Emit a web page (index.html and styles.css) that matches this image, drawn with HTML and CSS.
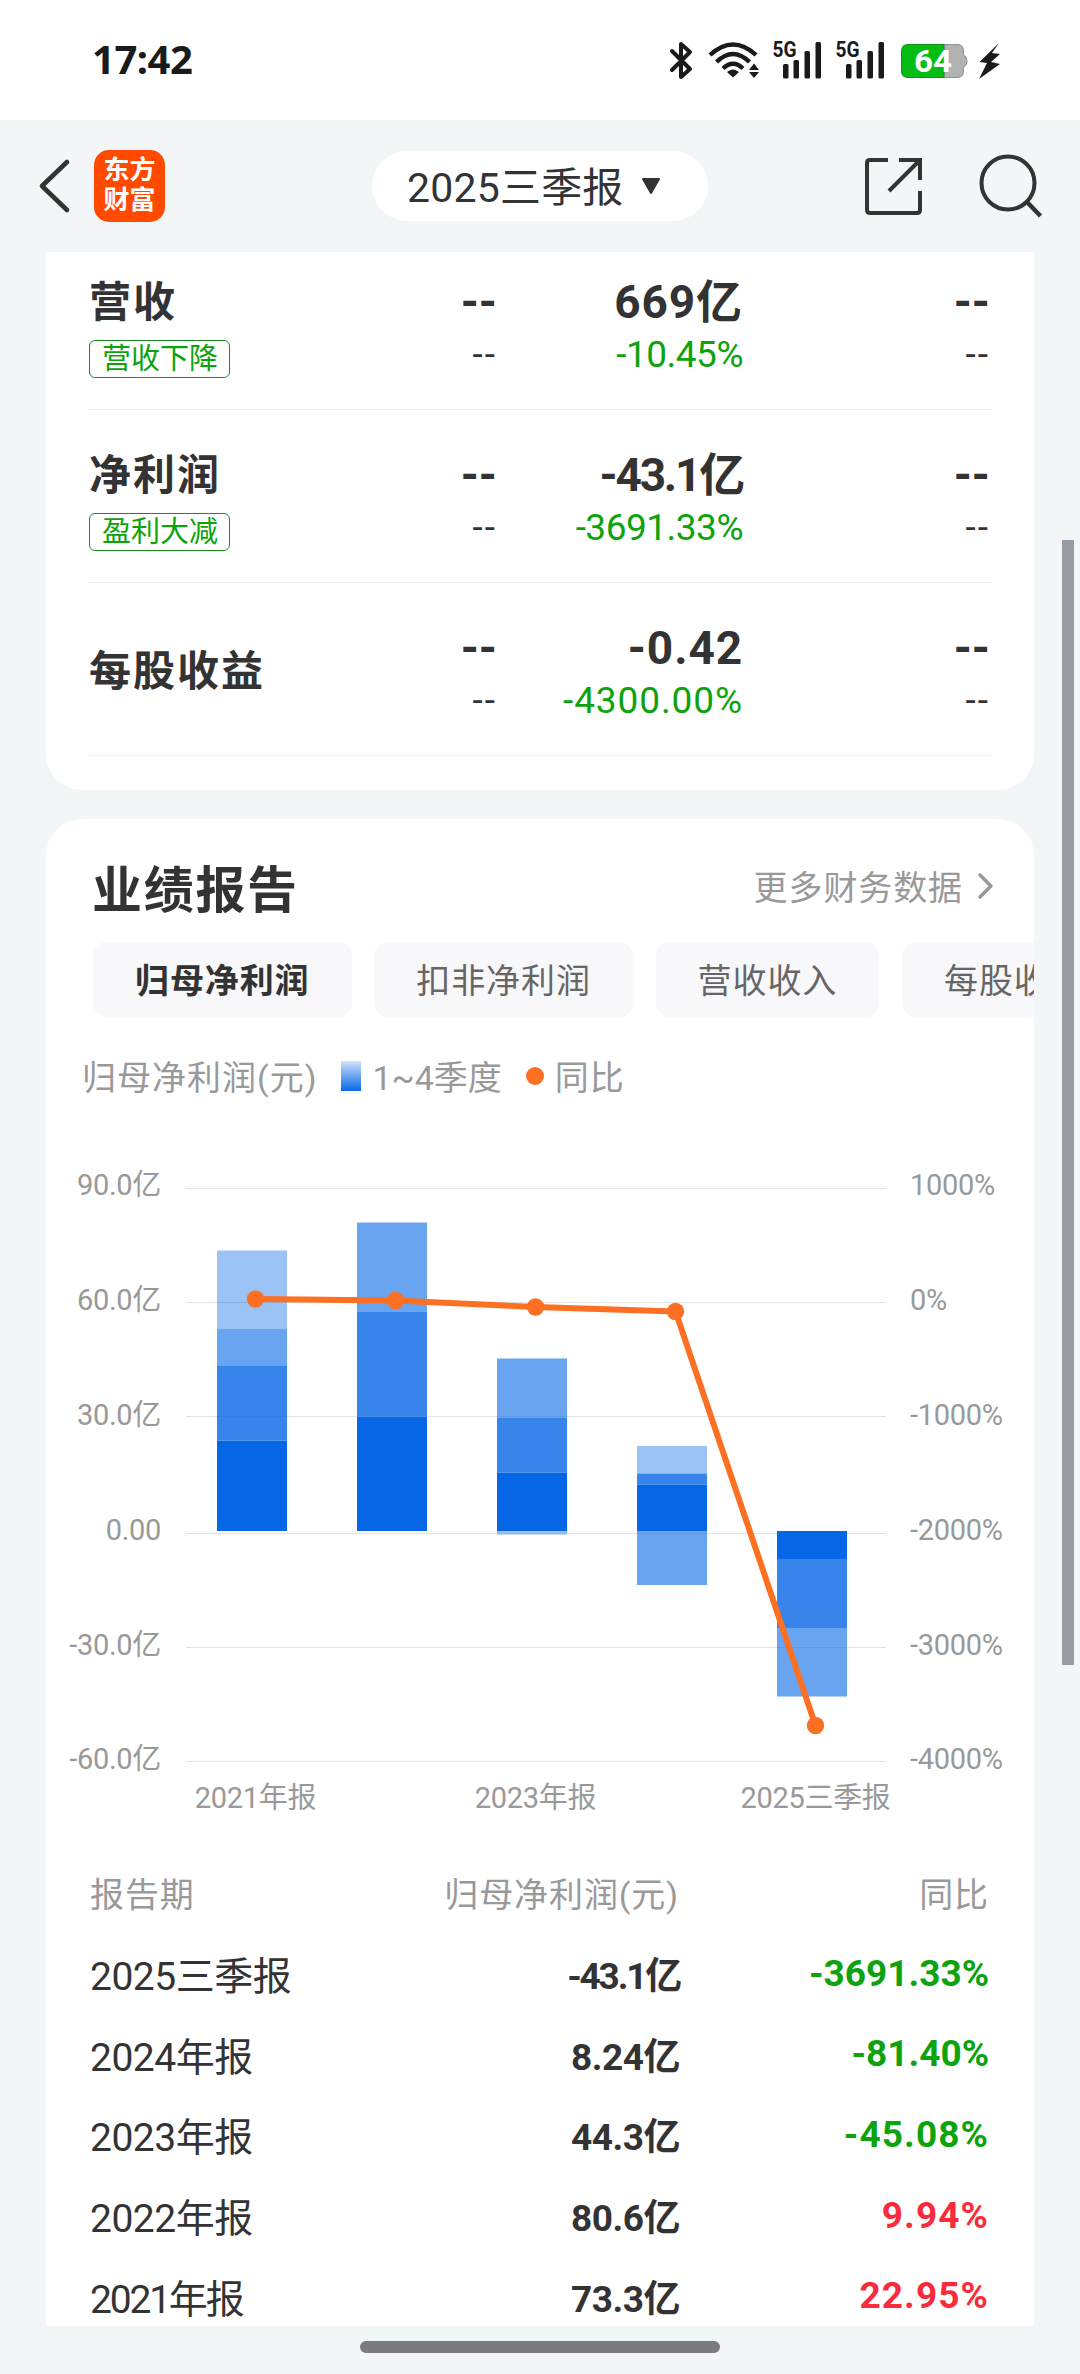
FILE: index.html
```html
<!DOCTYPE html>
<html lang="zh-CN">
<head>
    <meta charset="UTF-8">
    <meta name="viewport" content="width=device-width, initial-scale=1.0">
    <title>业绩报告</title>
    <link rel="stylesheet" href="styles.css">
</head>
<body>
    <div class="status-bar">
        <span class="time">17:42</span>
        <svg class="status-icons" width="340" height="48" viewBox="664 36 340 48">
            <path d="M672 51 L690 69 L681 77 L681 44 L690 52 L672 70" fill="none" stroke="#1a1a1a" stroke-width="4" stroke-linejoin="round" stroke-linecap="round"/>
            <g fill="none" stroke="#1a1a1a" stroke-width="4.4">
                <path d="M710 55 Q733 34 756 55"/>
                <path d="M716.500 62 Q733 46 749.500 62"/>
                <path d="M723 68.500 Q733 59 743 68.500"/>
            </g>
            <path d="M727 72 Q733 67 739 72 L733 77.500 Z" fill="#1a1a1a"/>
            <path d="M749 70 L754 63.500 L759 70 Z M749 72 L754 78 L759 72 Z" fill="#1a1a1a"/>
            <g id="signal" fill="#1a1a1a">
                <text class="net-label" x="772.500" y="57" textLength="24" lengthAdjust="spacingAndGlyphs">5G</text>
                <rect x="783" y="64" width="5.500" height="14.500" rx="1.500"/>
                <rect x="793.500" y="60" width="5.500" height="18.500" rx="1.500"/>
                <rect x="804.500" y="51" width="5.500" height="27.500" rx="1.500"/>
                <rect x="815.500" y="42" width="5.500" height="36.500" rx="1.500"/>
            </g>
            <use href="#signal" x="63"/>
            <path d="M944 44.500 H957 Q963.500 44.500 963.500 51 V55 Q967 56 967 61 Q967 66 963.500 67 V71 Q963.500 77.500 957 77.500 H944 Z" fill="#b1b1b1" stroke="#8f8f8f"/>
            <path d="M944 44.500 H908 Q901.500 44.500 901.500 51 V71 Q901.500 77.500 908 77.500 H944 Z" fill="#04bd14" stroke="#14901d"/>
            <text class="battery-text" x="914" y="72" textLength="38" lengthAdjust="spacingAndGlyphs">64</text>
            <path d="M999 43 L979.500 62 L987 63 L979 79 L1000 64 L991 62 L1000 54 L992 53 Z" fill="#1a1a1a"/>
        </svg>
    </div>

    <header class="navbar">
        <svg class="back" width="34" height="60" viewBox="0 0 34 60">
            <path d="M29 6 L4 30 L29 54" fill="none" stroke="#333" stroke-width="4.600" stroke-linecap="round" stroke-linejoin="round"/>
        </svg>
        <div class="logo">东方<br>财富</div>
        <div class="period">
            <span>2025三季报</span>
            <svg width="20" height="17" viewBox="0 0 20 17">
                <path d="M2 1 H18 L10 15 Z" fill="#333" stroke="#333" stroke-width="2" stroke-linejoin="round"/>
            </svg>
        </div>
        <svg class="share" width="60" height="60" viewBox="0 0 60 60">
            <g fill="none" stroke="#333" stroke-width="4">
                <path d="M24 4 H6 Q3 4 3 7 V54 Q3 57 6 57 H53 Q56 57 56 54 V35"/>
                <path d="M35 4 H56 V24 M56 4 L25 35"/>
            </g>
        </svg>
        <svg class="search" width="66" height="66" viewBox="0 0 66 66">
            <circle cx="30" cy="30" r="26.500" fill="none" stroke="#333" stroke-width="4"/>
            <path d="M49 49 L62.500 63" stroke="#333" stroke-width="4.500"/>
        </svg>
    </header>

    <main>
        <section class="card summary">
            <div class="row">
                <div class="name"><h3>营收</h3><span class="tag">营收下降</span></div>
                <div class="cell"><b>--</b><span class="none">--</span></div>
                <div class="cell"><b class="wide">669亿</b><span class="down">-10.45%</span></div>
                <div class="cell"><b>--</b><span class="none">--</span></div>
            </div>
            <div class="row">
                <div class="name"><h3>净利润</h3><span class="tag">盈利大减</span></div>
                <div class="cell"><b>--</b><span class="none">--</span></div>
                <div class="cell"><b class="narrow">-43.1亿</b><span class="down">-3691.33%</span></div>
                <div class="cell"><b>--</b><span class="none">--</span></div>
            </div>
            <div class="row">
                <div class="name"><h3>每股收益</h3></div>
                <div class="cell"><b>--</b><span class="none">--</span></div>
                <div class="cell"><b class="wide">-0.42</b><span class="down wide">-4300.00%</span></div>
                <div class="cell"><b>--</b><span class="none">--</span></div>
            </div>
        </section>

        <section class="card report">
            <div class="report-head">
                <h2>业绩报告</h2>
                <div class="more">
                    更多财务数据
                    <svg width="16" height="26" viewBox="0 0 16 26">
                        <path d="M2 2 L13 13 L2 24" fill="none" stroke="#999" stroke-width="3.400" stroke-linecap="round" stroke-linejoin="round"/>
                    </svg>
                </div>
            </div>
            <div class="tabs">
                <div class="tab active">归母净利润</div>
                <div class="tab">扣非净利润</div>
                <div class="tab">营收收入</div>
                <div class="tab">每股收益</div>
            </div>
            <div class="legend">
                <span>归母净利润(元)</span>
                <i class="swatch"></i>
                <span class="quarters">1~4季度</span>
                <i class="dot"></i>
                <span>同比</span>
            </div>

            <svg class="chart" width="988" height="700" viewBox="46 1130 988 700">
                <g class="grid">
                    <path d="M186 1188.500 H886 M186 1302.500 H886 M186 1416.500 H886 M186 1533.500 H886 M186 1647.500 H886 M186 1761.500 H886"/>
                </g>
                <g class="bars">
                    <rect class="q4" x="217" y="1250.500" width="70" height="78.500"/>
                    <rect class="q3" x="217" y="1329" width="70" height="37"/>
                    <rect class="q2" x="217" y="1366" width="70" height="74.500"/>
                    <rect class="q1" x="217" y="1440.500" width="70" height="90.500"/>

                    <rect class="q3" x="357" y="1222.500" width="70" height="89"/>
                    <rect class="q2" x="357" y="1311.500" width="70" height="105"/>
                    <rect class="q1" x="357" y="1416.500" width="70" height="114.500"/>

                    <rect class="q3" x="497" y="1358.500" width="70" height="59"/>
                    <rect class="q2" x="497" y="1417.500" width="70" height="55"/>
                    <rect class="q1" x="497" y="1472.500" width="70" height="58.500"/>
                    <rect class="q4" x="497" y="1531" width="70" height="3.500"/>

                    <rect class="q4" x="637" y="1446" width="70" height="27.500"/>
                    <rect class="q2" x="637" y="1473.500" width="70" height="11"/>
                    <rect class="q1" x="637" y="1484.500" width="70" height="46.500"/>
                    <rect class="q3" x="637" y="1531" width="70" height="54"/>

                    <rect class="q1" x="777" y="1531" width="70" height="28"/>
                    <rect class="q2" x="777" y="1559" width="70" height="69"/>
                    <rect class="q3" x="777" y="1628" width="70" height="68.500"/>
                </g>
                <polyline class="line" points="255.500,1299 395.500,1300.500 535.500,1307 675.500,1311.500 815.500,1725.500"/>
                <g class="points">
                    <circle cx="255.500" cy="1299" r="8.700"/>
                    <circle cx="395.500" cy="1300.500" r="8.700"/>
                    <circle cx="535.500" cy="1307" r="8.700"/>
                    <circle cx="675.500" cy="1311.500" r="8.700"/>
                    <circle cx="815.500" cy="1725.500" r="8.700"/>
                </g>
                <g class="axis axis-left">
                    <text x="161" y="1195">90.0亿</text>
                    <text x="161" y="1310">60.0亿</text>
                    <text x="161" y="1425">30.0亿</text>
                    <text x="161" y="1540">0.00</text>
                    <text x="161" y="1655">-30.0亿</text>
                    <text x="161" y="1769">-60.0亿</text>
                </g>
                <g class="axis">
                    <text x="910" y="1195">1000%</text>
                    <text x="910" y="1310">0%</text>
                    <text x="910" y="1425">-1000%</text>
                    <text x="910" y="1540">-2000%</text>
                    <text x="910" y="1655">-3000%</text>
                    <text x="910" y="1769">-4000%</text>
                </g>
                <g class="axis axis-bottom">
                    <text x="255.500" y="1808">2021年报</text>
                    <text x="535.500" y="1808">2023年报</text>
                    <text x="815.500" y="1808">2025三季报</text>
                </g>
            </svg>

            <table>
                <thead>
                    <tr><th>报告期</th><th>归母净利润(元)</th><th>同比</th></tr>
                </thead>
                <tbody>
                    <tr><td>2025三季报</td><td class="narrow">-43.1亿</td><td class="down">-3691.33%</td></tr>
                    <tr><td>2024年报</td><td>8.24亿</td><td class="down">-81.40%</td></tr>
                    <tr><td>2023年报</td><td>44.3亿</td><td class="down wide">-45.08%</td></tr>
                    <tr><td>2022年报</td><td>80.6亿</td><td class="up wide">9.94%</td></tr>
                    <tr><td class="narrow">2021年报</td><td>73.3亿</td><td class="up wide">22.95%</td></tr>
                </tbody>
            </table>
        </section>
    </main>

    <div class="scrollbar"></div>
    <div class="home-bar"></div>
</body>
</html>
```
FILE: styles.css
```css
* {
    box-sizing: border-box;
}
body {
    margin: 0;
    width: 1080px;
    height: 2374px;
    overflow: hidden;
    position: relative;
    background-color: #f2f6f7;
    color: #333;
    font-family: Roboto, "Noto Sans CJK SC", sans-serif;
}
h2, h3 {
    margin: 0;
}
svg {
    display: block;
    flex-shrink: 0;
}

/* status bar */
.status-bar {
    height: 120px;
    padding: 0 76px 0 92px;
    background-color: #fff;
    display: flex;
    align-items: center;
    justify-content: space-between;
}
.time {
    padding-bottom: 4px;
    font-family: "Noto Sans", sans-serif;
    font-size: 40px;
    font-weight: bold;
    color: #1a1a1a;
    letter-spacing: -0.5px;
}
.net-label {
    font-size: 22px;
    font-weight: bold;
}
.battery-text {
    font-size: 31px;
    font-weight: bold;
    fill: #fff;
}

/* top navigation */
.navbar {
    height: 132px;
    padding: 0 36px 0 38px;
    display: flex;
    align-items: center;
}
.logo {
    width: 71px;
    height: 72px;
    margin-left: 22px;
    padding-top: 5px;
    border-radius: 15px;
    background-color: #ff4a00;
    color: #fff;
    font-size: 26px;
    font-weight: bold;
    line-height: 30px;
    text-align: center;
}
.period {
    width: 336px;
    height: 70px;
    margin-left: 207px;
    padding-left: 35px;
    border-radius: 35px;
    background-color: #fff;
    display: flex;
    align-items: center;
    gap: 17px;
    font-size: 41px;
    letter-spacing: 0.2px;
    white-space: nowrap;
}
.period span {
    padding-bottom: 4px;
}
.share {
    margin-left: 156px;
}
.search {
    margin-left: 54px;
}

/* cards */
main {
    height: 2074px;
    margin: 0 46px;
    overflow: hidden;
}
.card {
    background-color: #fff;
    border-radius: 36px;
}
.summary {
    height: 538px;
    border-radius: 0 0 36px 36px;
    padding: 0 43px;
    overflow: hidden;
}
.row {
    height: 173px;
    padding-top: 9px;
    border-bottom: 1px solid #eee;
    display: grid;
    grid-template-columns: 249px 159px 246px 247px;
    align-items: center;
}
.row:first-child {
    margin-top: -15px;
}
.name {
    display: flex;
    flex-direction: column;
    align-items: flex-start;
    gap: 9px;
}
.name h3 {
    margin-top: -3px;
    font-size: 42px;
    line-height: 56px;
    letter-spacing: 2px;
}
.tag {
    height: 38px;
    padding: 0 11px 0 12px;
    border: 1px solid #1c8a22;
    border-radius: 6px;
    color: #0ca30c;
    font-size: 29px;
    line-height: 37px;
}
.cell {
    display: flex;
    flex-direction: column;
    align-items: flex-end;
    font-size: 37px;
    line-height: 52px;
    letter-spacing: -0.5px;
}
.cell b {
    font-size: 46px;
    line-height: 54px;
    letter-spacing: 0;
}
.cell .none {
    letter-spacing: 2px;
}
.cell .wide {
    letter-spacing: 0.9px;
}
.cell .narrow {
    letter-spacing: -2.2px;
}
.down {
    color: #0ca30c;
}
.up {
    color: #fa2c3c;
}

/* report card */
.report {
    height: 1560px;
    margin-top: 29px;
    overflow: hidden;
}
.report-head {
    height: 123px;
    padding: 10px 40px 0 46px;
    display: flex;
    align-items: center;
    justify-content: space-between;
}
.report-head h2 {
    font-size: 50px;
    letter-spacing: 1.7px;
}
.more {
    display: flex;
    align-items: center;
    gap: 15px;
    color: #999;
    font-size: 34px;
    letter-spacing: 0.9px;
}
.tabs {
    display: flex;
    gap: 22.8px;
    padding-left: 47px;
}
.tab {
    flex-shrink: 0;
    height: 75px;
    padding: 0 42px;
    border-radius: 14px;
    background-color: #f8f8fa;
    color: #666;
    font-size: 34px;
    line-height: 78px;
    letter-spacing: 0.9px;
}
.tab.active {
    color: #333;
    font-weight: bold;
}
.legend {
    height: 113px;
    padding: 4px 0 0 36px;
    display: flex;
    align-items: center;
    color: #999;
    font-size: 34px;
    letter-spacing: 1px;
}
.quarters {
    letter-spacing: 0;
}
.swatch {
    width: 20px;
    height: 30px;
    margin: 0 11px 0 24px;
    background: linear-gradient(#d3e3f9, #0667e8);
}
.dot {
    width: 18px;
    height: 18px;
    margin: 0 11px 0 24px;
    border-radius: 50%;
    background-color: #fd6f22;
}

/* chart */
.grid path {
    stroke: #e3e3e3;
    stroke-width: 1.2;
}
.bars rect {
    fill: #0567e6;
}
.bars .q2 {
    fill-opacity: 0.8;
}
.bars .q3 {
    fill-opacity: 0.6;
}
.bars .q4 {
    fill-opacity: 0.4;
}
.line {
    fill: none;
    stroke: #fd6f22;
    stroke-width: 6;
    stroke-linejoin: round;
}
.points {
    fill: #fd6f22;
}
.axis {
    fill: #999;
    font-size: 29px;
    letter-spacing: -0.3px;
}
.axis-left {
    text-anchor: end;
}
.axis-bottom {
    text-anchor: middle;
}

/* data table */
table {
    width: 902px;
    margin: 22px 0 0 43px;
    border-collapse: collapse;
    table-layout: fixed;
}
th, td {
    height: 80.7px;
    padding: 0 2px 0 0;
    text-align: right;
    white-space: nowrap;
}
th:nth-child(2) {
    width: 290px;
}
th {
    color: #999;
    font-size: 34px;
    font-weight: normal;
    letter-spacing: 0.9px;
}
td {
    font-size: 37px;
    font-weight: bold;
}
td:nth-child(2) {
    padding-right: 1px;
    letter-spacing: -0.5px;
}
td.wide {
    letter-spacing: 1.1px;
}
th:first-child, td:first-child {
    width: 302px;
    padding-left: 1px;
    text-align: left;
}
td:first-child {
    font-size: 39px;
    font-weight: normal;
    letter-spacing: -0.5px;
}
td:first-child.narrow,
td:nth-child(2).narrow {
    letter-spacing: -2.2px;
}

/* floating bars */
.scrollbar {
    position: absolute;
    left: 1062px;
    top: 540px;
    width: 12px;
    height: 1125px;
    background-color: #989aa4;
}
.home-bar {
    position: absolute;
    left: 360px;
    top: 2341px;
    width: 360px;
    height: 12px;
    border-radius: 6px;
    background-color: #7b7b7d;
}
```
